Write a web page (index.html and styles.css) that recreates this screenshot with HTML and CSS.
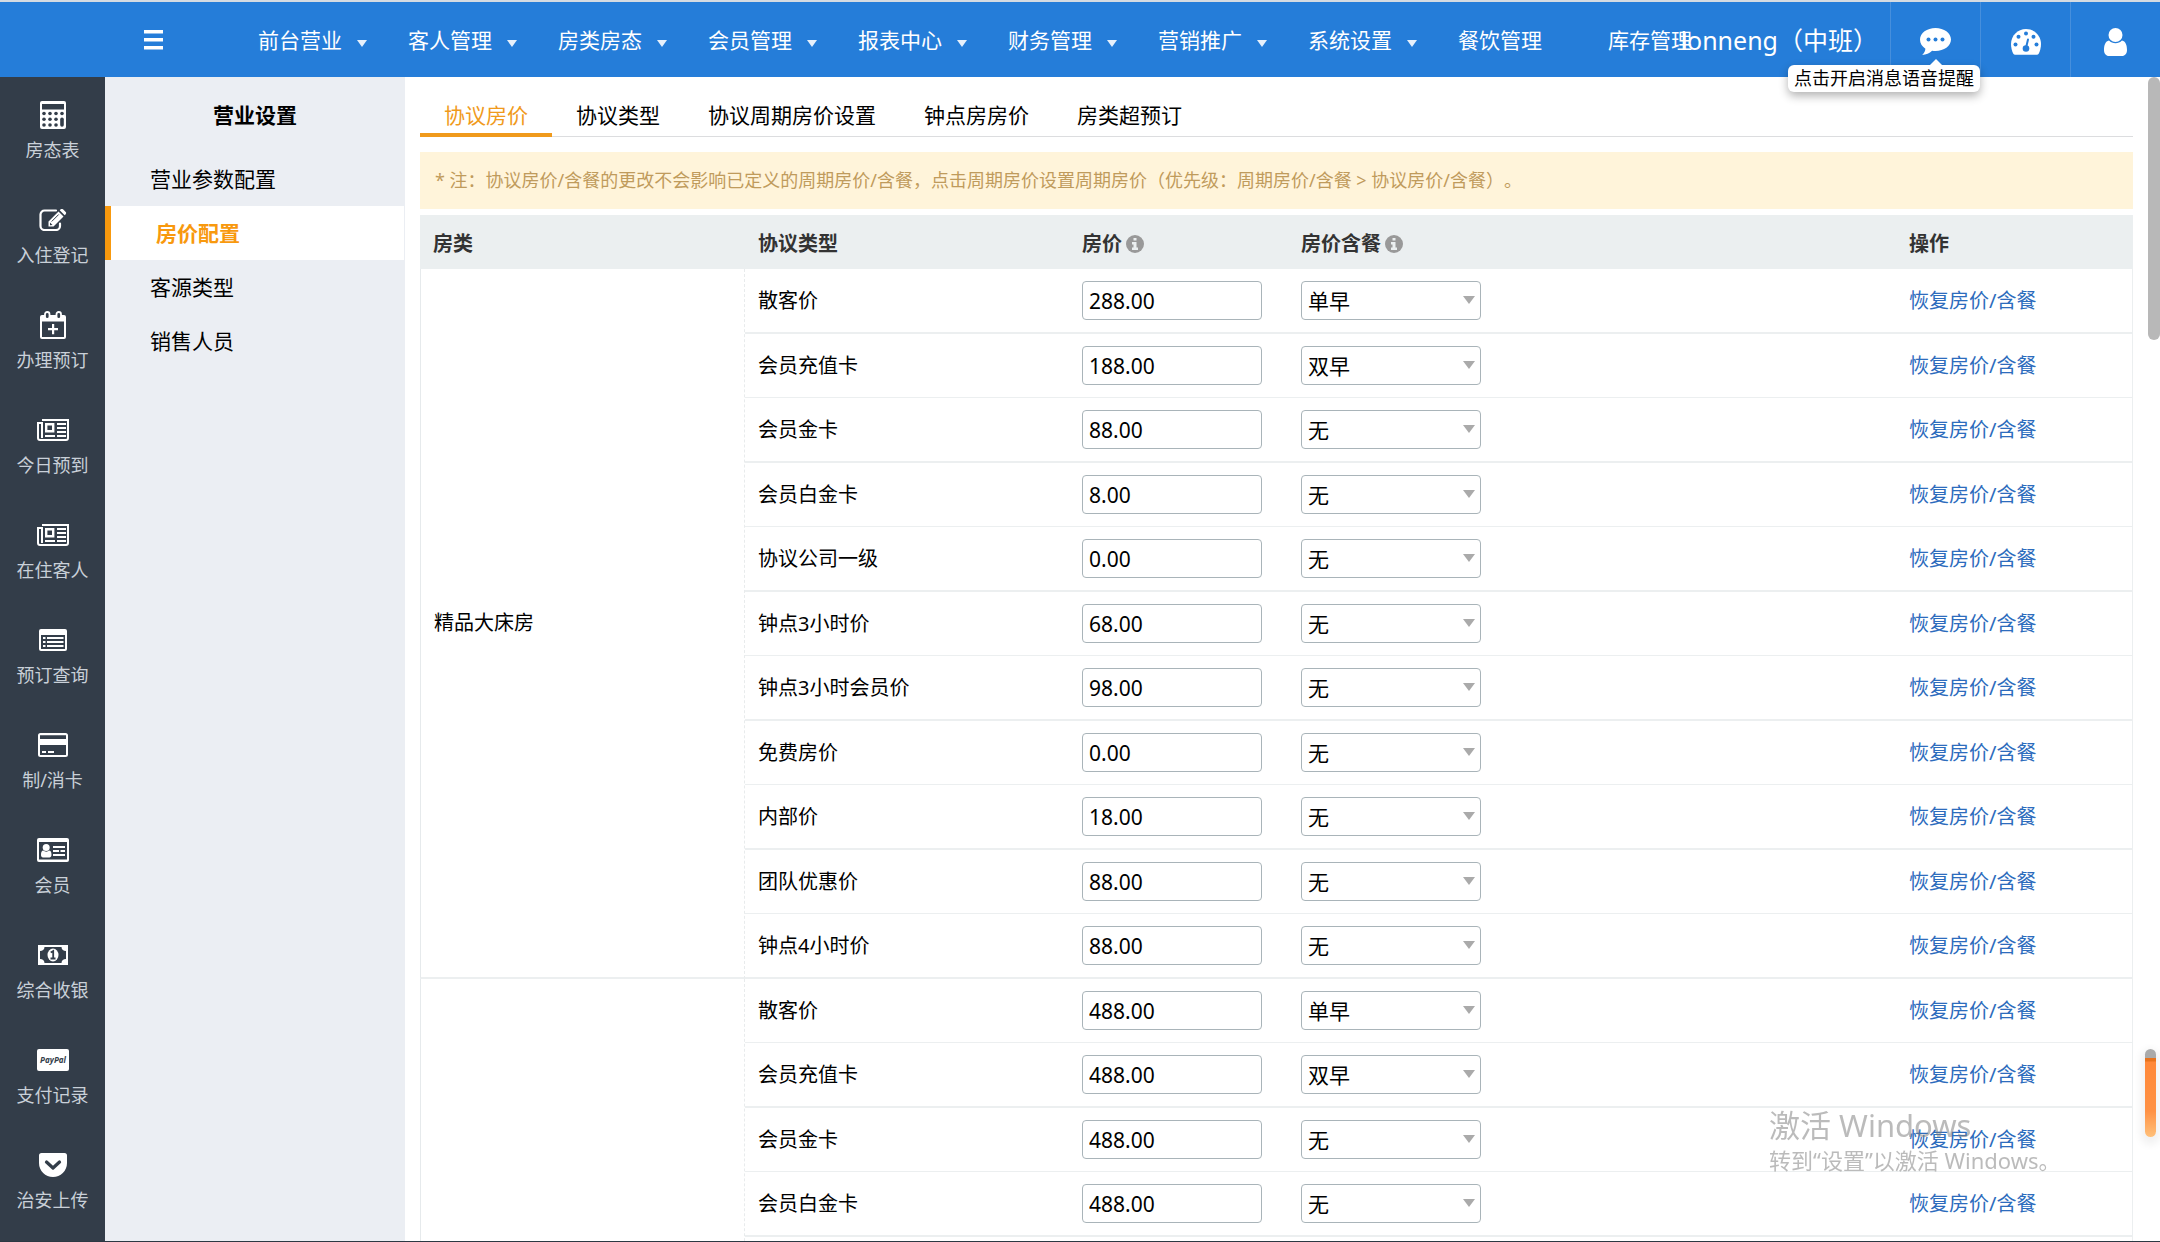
FILE: index.html
```html
<!DOCTYPE html>
<html lang="zh-CN">
<head>
<meta charset="utf-8">
<title>房价配置</title>
<link rel="stylesheet" href="styles.css">
</head>
<body>
<header class="topbar">
  <button class="menu-toggle" aria-label="菜单"><svg width="19" height="20" viewBox="0 0 19 20"><path fill="#fff" d="M0 0h19v3.5H0zM0 8h19v3.5H0zM0 16h19v3.5H0z"/></svg></button>
  <nav class="topnav">
    <button class="nav-item has-caret">前台营业</button>
    <button class="nav-item has-caret">客人管理</button>
    <button class="nav-item has-caret">房类房态</button>
    <button class="nav-item has-caret">会员管理</button>
    <button class="nav-item has-caret">报表中心</button>
    <button class="nav-item has-caret">财务管理</button>
    <button class="nav-item has-caret">营销推广</button>
    <button class="nav-item has-caret">系统设置</button>
    <a class="nav-item" href="#">餐饮管理</a>
    <a class="nav-item" href="#">库存管理</a>
  </nav>
  <span class="user-name">lonneng（中班）</span>
  <div class="tool">
    <button class="tool-button" aria-label="消息"><svg width="31" height="27" viewBox="0 0 31 27"><path fill="#fff" d="M15.500 0C24 0 31 5 31 11.500S24 23 15.500 23c-1.200 0-2.300-.1-3.400-.3C9.500 25.300 6 26.700 2.200 27c2-2 3-4 3.200-6.300C2 18.500 0 15.200 0 11.500 0 5 7 0 15.500 0z"/><g fill="#257dd9"><circle cx="8.500" cy="11.500" r="2"/><circle cx="15.500" cy="11.500" r="2"/><circle cx="22.500" cy="11.500" r="2"/></g></svg></button>
    <span class="tooltip" role="tooltip">点击开启消息语音提醒</span>
  </div>
  <div class="tool">
    <button class="tool-button" aria-label="控制台"><svg width="30" height="26" viewBox="0 0 30 26"><path fill="#fff" d="M15 0c8.300 0 15 6.700 15 15 0 3.500-.8 6.700-2.300 9.700-.4.700-1 1.100-1.800 1.100H4.100c-.8 0-1.400-.4-1.800-1.100C.8 21.700 0 18.500 0 15 0 6.700 6.700 0 15 0z"/><g fill="#257dd9"><circle cx="4.500" cy="15.500" r="2"/><circle cx="7.500" cy="7.800" r="2"/><circle cx="15" cy="4.500" r="2"/><circle cx="22.500" cy="7.800" r="2"/><circle cx="25.500" cy="15.500" r="2"/><circle cx="15" cy="19.500" r="3.300"/></g><path stroke="#257dd9" stroke-width="2" stroke-linecap="round" d="M15 19l2-8.500"/></svg></button>
  </div>
  <div class="tool">
    <button class="tool-button" aria-label="账户"><svg width="23" height="28" viewBox="0 0 23 28"><g fill="#fff"><circle cx="11.500" cy="7" r="7"/><path d="M5 12.500c1.800 1.700 4 2.700 6.500 2.700s4.700-1 6.500-2.700c3.500.7 5 4.500 5 9.500 0 3.500-2 6-5 6H5c-3 0-5-2.500-5-6 0-5 1.500-8.800 5-9.500z"/></g></svg></button>
  </div>
</header>

<div class="workspace">
  <nav class="rail">
    <a class="rail-item" href="#"><span class="rail-icon"><svg width="26" height="28" viewBox="0 0 26 28"><path fill="#fff" fill-rule="evenodd" d="M2 0h22a2 2 0 0 1 2 2v24a2 2 0 0 1-2 2H2a2 2 0 0 1-2-2V2a2 2 0 0 1 2-2zM2 3v5.500h22V3z"/><g fill="#333d49"><circle cx="4" cy="12.500" r="1.800"/><circle cx="10" cy="12.500" r="1.800"/><circle cx="16" cy="12.500" r="1.800"/><circle cx="22" cy="12.500" r="1.800"/><circle cx="4" cy="18.200" r="1.800"/><circle cx="10" cy="18.200" r="1.800"/><circle cx="16" cy="18.200" r="1.800"/><circle cx="4" cy="24" r="1.800"/><circle cx="10" cy="24" r="1.800"/><circle cx="16" cy="24" r="1.800"/><rect x="20.200" y="16.400" width="3.600" height="9.400" rx="1.800"/></g></svg></span>房态表</a>
    <a class="rail-item" href="#"><span class="rail-icon"><svg width="28" height="22" viewBox="0 0 28 22"><path fill="none" stroke="#fff" stroke-width="2.200" stroke-linecap="round" d="M17 1.500H5.500a4 4 0 0 0-4 4V17a4 4 0 0 0 4 4H17a4 4 0 0 0 4-4v-2.500"/><path fill="#fff" d="M9.500 17.500v-5L19.500 2.500l5 5-10 10zM20.700 1.300l1-1c.7-.6 1.700-.6 2.300 0l2.700 2.700c.6.600.6 1.600 0 2.300l-1 1z"/><path stroke="#333d49" stroke-width="1" d="M19.700 5.500l-7 7"/><path fill="#333d49" d="M11 13.500l2.500 2.500-2.500.2z"/></svg></span>入住登记</a>
    <a class="rail-item" href="#"><span class="rail-icon"><svg width="26" height="28" viewBox="0 0 26 28"><path fill="#fff" fill-rule="evenodd" d="M2 4h22a2 2 0 0 1 2 2v20a2 2 0 0 1-2 2H2a2 2 0 0 1-2-2V6a2 2 0 0 1 2-2zm0 6.500V26h22V10.500z"/><rect x="5" y="1" width="4.500" height="7" rx="2.200" fill="#333d49" stroke="#fff" stroke-width="1.800"/><rect x="16.500" y="1" width="4.500" height="7" rx="2.200" fill="#333d49" stroke="#fff" stroke-width="1.800"/><path fill="#fff" d="M12 13h2.200v4H18v2.200h-3.800v4H12v-4H8V17h4z"/></svg></span>办理预订</a>
    <a class="rail-item" href="#"><span class="rail-icon"><svg width="32" height="22" viewBox="0 0 32 22"><path fill="none" stroke="#fff" stroke-width="2" d="M5 1h26v18a2 2 0 0 1-2 2H3a2 2 0 0 1-2-2V4h4v15"/><path fill="none" stroke="#fff" stroke-width="2.400" d="M9.200 5.200h7v7h-7z"/><path stroke="#fff" stroke-width="2" d="M20 5h9M20 9h9M20 13h9M8 17h10M20 17h9"/></svg></span>今日预到</a>
    <a class="rail-item" href="#"><span class="rail-icon"><svg width="32" height="22" viewBox="0 0 32 22"><path fill="none" stroke="#fff" stroke-width="2" d="M5 1h26v18a2 2 0 0 1-2 2H3a2 2 0 0 1-2-2V4h4v15"/><path fill="none" stroke="#fff" stroke-width="2.400" d="M9.200 5.200h7v7h-7z"/><path stroke="#fff" stroke-width="2" d="M20 5h9M20 9h9M20 13h9M8 17h10M20 17h9"/></svg></span>在住客人</a>
    <a class="rail-item" href="#"><span class="rail-icon"><svg width="28" height="22" viewBox="0 0 28 22"><path fill="#fff" fill-rule="evenodd" d="M2 0h24a2 2 0 0 1 2 2v18a2 2 0 0 1-2 2H2a2 2 0 0 1-2-2V2a2 2 0 0 1 2-2zm0 6v14h24V6z"/><path stroke="#fff" stroke-width="1.800" d="M4 9h2.500M8 9h16.500M4 13h2.500M8 13h16.500M4 17h2.500M8 17h16.500"/></svg></span>预订查询</a>
    <a class="rail-item" href="#"><span class="rail-icon"><svg width="30" height="24" viewBox="0 0 30 24"><path fill="#fff" fill-rule="evenodd" d="M2.500 0h25A2.500 2.500 0 0 1 30 2.500v19a2.500 2.500 0 0 1-2.500 2.500h-25A2.500 2.500 0 0 1 0 21.500v-19A2.500 2.500 0 0 1 2.500 0zM2 2.200V6h26V2.200zM2 12v10h26V12z"/><path stroke="#fff" stroke-width="2" d="M4 19h4M10 19h6"/></svg></span>制/消卡</a>
    <a class="rail-item" href="#"><span class="rail-icon"><svg width="32" height="24" viewBox="0 0 32 24"><path fill="#fff" fill-rule="evenodd" d="M2 0h28a2 2 0 0 1 2 2v20a2 2 0 0 1-2 2H2a2 2 0 0 1-2-2V2a2 2 0 0 1 2-2zm0 4v17.500h28V4z"/><g fill="#fff"><circle cx="9.200" cy="9.500" r="3.500"/><path d="M6 12.500c2 1.500 4.500 1.500 6.500 0 1.500.5 2 2 2 4.500 0 1.500-1 2.500-2 2.500H6c-1.200 0-2-1-2-2.500 0-2.500.5-4 2-4.500z"/></g><path stroke="#fff" stroke-width="2" d="M16 9h12M16 13h6M23.500 13H28M16 17h12"/></svg></span>会员</a>
    <a class="rail-item" href="#"><span class="rail-icon"><svg width="30" height="20" viewBox="0 0 30 20"><path fill="#fff" fill-rule="evenodd" d="M0 0h30v20H0zM6.500 2c0 2.500-2 4-4.500 4v8c2.500 0 4.500 1.500 4.500 4h17c0-2.500 2-4 4.500-4V6c-2.500 0-4.500-1.500-4.500-4z"/><ellipse cx="15" cy="10" rx="5.500" ry="6.500" fill="#fff"/><path fill="none" stroke="#333d49" stroke-width="1.800" d="M12.700 7.500l2.500-1.500v7M12.500 13.500h5"/></svg></span>综合收银</a>
    <a class="rail-item" href="#"><span class="rail-icon"><svg width="32" height="22" viewBox="0 0 32 22"><rect width="32" height="22" rx="2" fill="#fff"/><text x="16" y="14" text-anchor="middle" class="paypal-text">PayPal</text></svg></span>支付记录</a>
    <a class="rail-item" href="#"><span class="rail-icon"><svg width="28" height="24" viewBox="0 0 28 24"><path fill="#fff" d="M2.500 0h23A2.500 2.500 0 0 1 28 2.500V10c0 8-6.500 14-14 14S0 18 0 10V2.500A2.500 2.500 0 0 1 2.500 0z"/><path fill="none" stroke="#333d49" stroke-width="3.200" stroke-linecap="round" stroke-linejoin="round" d="M7.500 9l6.500 6 6.500-6"/></svg></span>治安上传</a>
  </nav>

  <aside class="submenu">
    <h2 class="submenu-title">营业设置</h2>
    <a class="submenu-item" href="#">营业参数配置</a>
    <a class="submenu-item is-active" href="#">房价配置</a>
    <a class="submenu-item" href="#">客源类型</a>
    <a class="submenu-item" href="#">销售人员</a>
  </aside>

  <main class="content">
    <div class="tabs">
      <a class="tab is-active" href="#">协议房价</a>
      <a class="tab" href="#">协议类型</a>
      <a class="tab" href="#">协议周期房价设置</a>
      <a class="tab" href="#">钟点房房价</a>
      <a class="tab" href="#">房类超预订</a>
    </div>
    <p class="notice">* 注：协议房价/含餐的更改不会影响已定义的周期房价/含餐，点击周期房价设置周期房价（优先级：周期房价/含餐 &gt; 协议房价/含餐）。</p>
    <table class="price-table">
      <colgroup><col class="col-room"><col class="col-type"><col class="col-price"><col><col class="col-action"></colgroup>
      <thead>
        <tr>
          <th>房类</th>
          <th>协议类型</th>
          <th><span class="with-info">房价<svg width="18" height="18" viewBox="0 0 18 18"><circle cx="9" cy="9" r="9" fill="#999"/><path fill="#ebeff0" d="M7.500 3h3v2.500h-3zM6 7h4.500v5.500H12V15H6v-2.500h1.500v-3H6z"/></svg></span></th>
          <th><span class="with-info">房价含餐<svg width="18" height="18" viewBox="0 0 18 18"><circle cx="9" cy="9" r="9" fill="#999"/><path fill="#ebeff0" d="M7.500 3h3v2.500h-3zM6 7h4.500v5.500H12V15H6v-2.500h1.500v-3H6z"/></svg></span></th>
          <th>操作</th>
        </tr>
      </thead>
      <tbody>
        <tr><td class="room" rowspan="11">精品大床房</td><td>散客价</td><td><input class="field" aria-label="散客价房价" value="288.00"></td><td><span class="select"><select class="field" aria-label="散客价含餐"><option>单早</option></select></span></td><td><a class="reset" href="#">恢复房价/含餐</a></td></tr>
        <tr><td>会员充值卡</td><td><input class="field" aria-label="会员充值卡房价" value="188.00"></td><td><span class="select"><select class="field" aria-label="会员充值卡含餐"><option>双早</option></select></span></td><td><a class="reset" href="#">恢复房价/含餐</a></td></tr>
        <tr><td>会员金卡</td><td><input class="field" aria-label="会员金卡房价" value="88.00"></td><td><span class="select"><select class="field" aria-label="会员金卡含餐"><option>无</option></select></span></td><td><a class="reset" href="#">恢复房价/含餐</a></td></tr>
        <tr><td>会员白金卡</td><td><input class="field" aria-label="会员白金卡房价" value="8.00"></td><td><span class="select"><select class="field" aria-label="会员白金卡含餐"><option>无</option></select></span></td><td><a class="reset" href="#">恢复房价/含餐</a></td></tr>
        <tr><td>协议公司一级</td><td><input class="field" aria-label="协议公司一级房价" value="0.00"></td><td><span class="select"><select class="field" aria-label="协议公司一级含餐"><option>无</option></select></span></td><td><a class="reset" href="#">恢复房价/含餐</a></td></tr>
        <tr><td>钟点3小时价</td><td><input class="field" aria-label="钟点3小时价房价" value="68.00"></td><td><span class="select"><select class="field" aria-label="钟点3小时价含餐"><option>无</option></select></span></td><td><a class="reset" href="#">恢复房价/含餐</a></td></tr>
        <tr><td>钟点3小时会员价</td><td><input class="field" aria-label="钟点3小时会员价房价" value="98.00"></td><td><span class="select"><select class="field" aria-label="钟点3小时会员价含餐"><option>无</option></select></span></td><td><a class="reset" href="#">恢复房价/含餐</a></td></tr>
        <tr><td>免费房价</td><td><input class="field" aria-label="免费房价" value="0.00"></td><td><span class="select"><select class="field" aria-label="免费房价含餐"><option>无</option></select></span></td><td><a class="reset" href="#">恢复房价/含餐</a></td></tr>
        <tr><td>内部价</td><td><input class="field" aria-label="内部价房价" value="18.00"></td><td><span class="select"><select class="field" aria-label="内部价含餐"><option>无</option></select></span></td><td><a class="reset" href="#">恢复房价/含餐</a></td></tr>
        <tr><td>团队优惠价</td><td><input class="field" aria-label="团队优惠价房价" value="88.00"></td><td><span class="select"><select class="field" aria-label="团队优惠价含餐"><option>无</option></select></span></td><td><a class="reset" href="#">恢复房价/含餐</a></td></tr>
        <tr><td>钟点4小时价</td><td><input class="field" aria-label="钟点4小时价房价" value="88.00"></td><td><span class="select"><select class="field" aria-label="钟点4小时价含餐"><option>无</option></select></span></td><td><a class="reset" href="#">恢复房价/含餐</a></td></tr>
        <tr><td class="room" rowspan="5"></td><td>散客价</td><td><input class="field" aria-label="散客价房价" value="488.00"></td><td><span class="select"><select class="field" aria-label="散客价含餐"><option>单早</option></select></span></td><td><a class="reset" href="#">恢复房价/含餐</a></td></tr>
        <tr><td>会员充值卡</td><td><input class="field" aria-label="会员充值卡房价" value="488.00"></td><td><span class="select"><select class="field" aria-label="会员充值卡含餐"><option>双早</option></select></span></td><td><a class="reset" href="#">恢复房价/含餐</a></td></tr>
        <tr><td>会员金卡</td><td><input class="field" aria-label="会员金卡房价" value="488.00"></td><td><span class="select"><select class="field" aria-label="会员金卡含餐"><option>无</option></select></span></td><td><a class="reset" href="#">恢复房价/含餐</a></td></tr>
        <tr><td>会员白金卡</td><td><input class="field" aria-label="会员白金卡房价" value="488.00"></td><td><span class="select"><select class="field" aria-label="会员白金卡含餐"><option>无</option></select></span></td><td><a class="reset" href="#">恢复房价/含餐</a></td></tr>
        <tr><td></td><td></td><td></td><td></td></tr>
      </tbody>
    </table>
    <div class="scroll-thumb"></div>
  </main>
</div>

<div class="side-handle"></div>
<div class="watermark">
  <div class="watermark-title">激活 Windows</div>
  <div class="watermark-text">转到“设置”以激活 Windows。</div>
</div>
</body>
</html>
```
FILE: styles.css
```css
* { box-sizing: border-box; }

body {
  margin: 0;
  height: 100vh;
  display: flex;
  flex-direction: column;
  overflow: hidden;
  border-top: 2px solid #d5dbe2;
  border-bottom: 1px solid #2c3843;
  background: #fff;
  color: #000;
  font-family: "Noto Sans", "Noto Sans CJK SC", sans-serif;
  font-size: 20px;
  line-height: 24px;
  text-spacing-trim: space-all;
}

a { color: inherit; text-decoration: none; }

button {
  padding: 0;
  border: 0;
  background: none;
  color: inherit;
  font: inherit;
}

svg { display: block; flex: none; }

/* Top bar */
.topbar {
  flex: none;
  display: flex;
  height: 75px;
  background: #257dd9;
  color: #fff;
}

.menu-toggle {
  flex: none;
  display: flex;
  align-items: center;
  width: 258px;
  padding-left: 144px;
}

.topnav {
  flex: 1;
  min-width: 0;
  display: flex;
  font-size: 21px;
}

.nav-item {
  flex: none;
  display: flex;
  align-items: center;
  gap: 15px;
  width: 150px;
  white-space: nowrap;
}

.has-caret::after {
  content: "";
  margin-top: 8px;
  border: solid transparent;
  border-width: 7px 5px 0;
  border-top-color: #e6f0fb;
}

.user-name {
  flex: none;
  display: flex;
  align-items: center;
  padding-right: 12px;
  font-size: 25px;
  white-space: nowrap;
}

.tool {
  flex: none;
  position: relative;
  width: 90px;
  border-left: 1px solid #468fdd;
}

.tool-button {
  display: flex;
  align-items: center;
  justify-content: center;
  width: 100%;
  height: 100%;
  padding-top: 4px;
}

.tooltip {
  position: absolute;
  z-index: 3;
  top: 63px;
  right: 0;
  padding: 0 6px;
  border-radius: 6px;
  background: #fff;
  box-shadow: 0 4px 10px rgba(0, 0, 0, 0.3);
  color: #000;
  font-size: 18px;
  line-height: 27px;
  white-space: nowrap;
}

.tooltip::before {
  content: "";
  position: absolute;
  right: 38px;
  bottom: 100%;
  border: solid transparent;
  border-width: 0 6px 6px;
  border-bottom-color: #fff;
}

/* Body columns */
.workspace {
  flex: 1;
  min-height: 0;
  display: flex;
}

.rail {
  flex: none;
  width: 105px;
  overflow: hidden;
  background: #333d49;
  color: #c9d0d8;
  font-size: 18px;
}

.rail-item {
  display: flex;
  flex-direction: column;
  align-items: center;
  gap: 9px;
  height: 105px;
  padding-top: 24px;
}

.rail-icon {
  display: flex;
  align-items: center;
  height: 28px;
}

.paypal-text {
  fill: #333d49;
  font: italic bold 8px "Noto Sans", sans-serif;
}

.submenu {
  flex: none;
  width: 300px;
  background: #ebeef3;
  font-size: 21px;
}

.submenu-title {
  margin: 0;
  padding-top: 2px;
  height: 75px;
  font-size: 21px;
  line-height: 72px;
  text-align: center;
}

.submenu-item {
  display: block;
  padding-left: 45px;
  line-height: 54px;
}

.submenu-item.is-active {
  margin-right: 1px;
  border-left: 6px solid #f8990e;
  background: #fff;
  color: #f8990e;
  font-weight: bold;
}

.content {
  flex: 1;
  min-width: 0;
  position: relative;
  overflow: hidden;
  padding: 0 27px 0 15px;
}

.tabs {
  display: flex;
  height: 60px;
  margin-bottom: 15px;
  box-shadow: inset 0 -1px #dcdddf;
  font-size: 21px;
}

.tab {
  padding: 0 24px;
  line-height: 76px;
}

.tab.is-active {
  border-bottom: 4px solid #f09a1c;
  color: #f09a1c;
}

.notice {
  margin: 0 0 6px;
  padding: 0 15px;
  background: #fff4da;
  color: #bf9b5c;
  font-size: 18px;
  line-height: 57px;
}

/* Price table */
.price-table {
  width: 100%;
  table-layout: fixed;
  border-spacing: 0;
}

.col-room { width: 325px; }
.col-type { width: 324px; }
.col-price { width: 219px; }
.col-action { width: 237px; }

.price-table th {
  height: 54px;
  padding: 3px 13px 0;
  background: #ebeff0;
  color: #333;
  text-align: left;
}

.with-info {
  display: flex;
  align-items: center;
  gap: 4px;
}

.price-table td {
  padding: 0 13px;
  border-bottom: 1px solid #eceff0;
}

.price-table tbody tr { height: 64px; }
.price-table tbody tr:nth-child(odd) { height: 65px; }
.price-table tbody tr:nth-child(odd) td { border-bottom-width: 2px; }
.price-table td:last-child { border-right: 1px solid #eceff0; }

.price-table .room {
  border-left: 1px solid #e6eaec;
  border-right: 1px dashed #e8ebec;
}

.field {
  display: block;
  width: 180px;
  height: 39px;
  padding: 0 6px;
  border: 1px solid #a9b4b9;
  border-radius: 4px;
  background: #fff;
  color: #000;
  font: inherit;
  font-size: 21px;
  appearance: none;
}

.select {
  display: block;
  position: relative;
  width: 180px;
}

.select::after {
  content: "";
  position: absolute;
  top: 15px;
  right: 6px;
  border: solid transparent;
  border-width: 8px 6px 0;
  border-top-color: #aaa;
  pointer-events: none;
}

.reset { color: #2d6cbd; }

/* Overlays */
.scroll-thumb {
  position: absolute;
  top: 0;
  right: 0;
  width: 12px;
  height: 263px;
  border-radius: 6px;
  background: #b8b8b8;
}

.side-handle {
  position: fixed;
  right: 4px;
  bottom: 105px;
  width: 11px;
  height: 88px;
  border-radius: 6px;
  background: linear-gradient(#aaa 9px, #e8731d 9px, #e8731d 12px, #ff8838 13px, #ff9144 62px, #ffc07a);
  box-shadow: 0 4px 8px 4px rgba(0, 0, 0, 0.06);
}

.watermark {
  position: fixed;
  right: 105px;
  bottom: 67px;
  width: 286px;
  color: rgba(120, 120, 120, 0.5);
  pointer-events: none;
  white-space: nowrap;
}

.watermark-title {
  font-size: 31px;
  line-height: 40px;
}

.watermark-text {
  font-size: 22px;
  line-height: 30px;
}
```
